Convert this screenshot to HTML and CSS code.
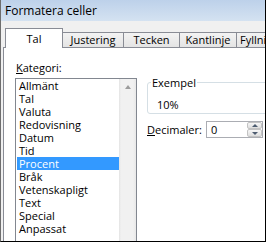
FILE: index.html
```html
<!DOCTYPE html>
<html>
<head>
<meta charset="UTF-8">
<title>Formatera celler</title>
<link rel="stylesheet" href="styles.css">
</head>
<body>
<div class="window">
  <div class="titlebar">Formatera celler</div>
  <div class="dialog">
    <div class="tabs">
      <div class="tab tab-active tab-tal">Tal</div>
      <div class="tab tab-justering">Justering</div>
      <div class="tab tab-tecken">Tecken</div>
      <div class="tab tab-kantlinje">Kantlinje</div>
      <div class="tab tab-fyllning">Fyllning</div>
    </div>
    <div class="panel">
      <div class="category">
        <div class="label"><u>K</u>ategori:</div>
        <div class="listbox">
          <ul class="items">
            <li>Allmänt</li>
            <li>Tal</li>
            <li>Valuta</li>
            <li>Redovisning</li>
            <li>Datum</li>
            <li>Tid</li>
            <li class="selected">Procent</li>
            <li>Bråk</li>
            <li>Vetenskapligt</li>
            <li>Text</li>
            <li>Special</li>
            <li>Anpassat</li>
          </ul>
          <div class="scrollbar"><span class="scroll-up"></span></div>
        </div>
      </div>
      <div class="options">
        <fieldset class="sample">
          <legend>Exempel</legend>
          <div class="sample-value">10%</div>
        </fieldset>
        <div class="decimals">
          <div class="decimals-label"><u>D</u>ecimaler:</div>
          <div class="spin">
            <span class="spin-value">0</span>
            <div class="spin-buttons">
              <span class="spin-up"></span>
              <span class="spin-down"></span>
            </div>
          </div>
        </div>
      </div>
    </div>
  </div>
</div>
</body>
</html>
```

FILE: styles.css
```css
* {
  margin: 0;
  padding: 0;
  box-sizing: border-box;
}

body {
  background: #fff;
  font: 11px/13px "Open Sans", "Liberation Sans", Arial, sans-serif;
  color: #000;
}

.window {
  width: 266px;
  height: 242px;
  overflow: hidden;
  background: #f0f0f0;
  border-left: 1px solid #6e6e6e;
  border-right: 1px solid #000;
  border-bottom: 1px solid #000;
}

.titlebar {
  height: 21px;
  padding: 1px 0 0 4px;
  font-size: 12px;
  line-height: 20px;
  white-space: nowrap;
  background: linear-gradient(#bdd1ea, #d4e2f1);
}

.dialog {
  width: 360px;
  padding: 7px 0 0 2px;
}

/* tabs */

.tabs {
  display: flex;
  align-items: flex-end;
  height: 19px;
  padding-left: 2px;
}

.tab {
  height: 15px;
  padding-top: 1px;
  line-height: 12px;
  text-align: center;
  white-space: nowrap;
  border-top: 1px solid #898c95;
  border-right: 1px solid #898c95;
  background: linear-gradient(#f3f3f3, #e4e4e4);
}

.tab-active {
  height: 20px;
  margin-bottom: -1px;
  padding-top: 4px;
  border-left: 1px solid #898c95;
  background: #fff;
}

.tab-tal { width: 58px; }
.tab-justering { width: 61px; }
.tab-tecken { width: 56px; }
.tab-kantlinje { width: 57px; }
.tab-fyllning { width: 60px; text-align: left; padding-left: 3px; }

/* panel */

.panel {
  display: flex;
  height: 250px;
  padding: 13px 0 0 11px;
  background: #fff;
  border-top: 1px solid #898c95;
  border-left: 1px solid #898c95;
}

.category {
  width: 122px;
}

.label {
  margin-left: 1px;
}

.listbox {
  display: flex;
  height: 170px;
  margin-top: 4px;
  padding-left: 1px;
  border: 1px solid #828790;
}

.items {
  width: 102px;
  list-style: none;
}

.items li {
  height: 13px;
  padding-left: 2px;
}

.items .selected {
  background: #3399ff;
  color: #fff;
}

.scrollbar {
  width: 17px;
  display: flex;
  justify-content: center;
  padding-top: 6px;
  background: linear-gradient(to right, #e3e3e3, #f1f1f1 2px, #f1f1f1 14px, #e8e8e8);
}

.scroll-up {
  width: 0;
  height: 0;
  border-left: 3px solid transparent;
  border-right: 3px solid transparent;
  border-bottom: 4px solid #9c9c9c;
}

/* right side */

.options {
  margin-left: 10px;
}

.sample {
  width: 150px;
  margin-top: 15px;
  padding: 0 0 2px 3px;
  border: 1px solid #d5dfe5;
  border-radius: 3px;
}

.sample legend {
  padding: 0 1px;
}

.sample-value {
  margin-top: 9px;
  padding-left: 6px;
}

.decimals {
  display: flex;
  align-items: center;
  margin-top: 7px;
}

.decimals-label {
  width: 59px;
}

.spin {
  display: flex;
  width: 57px;
  height: 17px;
  background: #fff;
  border: 1px solid #abadb3;
}

.spin-value {
  flex: 1;
  padding-left: 4px;
  line-height: 15px;
}

.spin-buttons {
  display: flex;
  flex-direction: column;
  width: 15px;
}

.spin-up,
.spin-down {
  display: flex;
  align-items: center;
  justify-content: center;
  border: 1px solid #c3c3c3;
  border-radius: 2px;
  background: linear-gradient(#f7f7f7, #dedede);
}

.spin-up { height: 7px; }
.spin-down { height: 8px; }

.spin-up::after {
  content: "";
  border-left: 3px solid transparent;
  border-right: 3px solid transparent;
  border-bottom: 3px solid #4d5c70;
}

.spin-down::after {
  content: "";
  border-left: 3px solid transparent;
  border-right: 3px solid transparent;
  border-top: 3px solid #4d5c70;
}
```
